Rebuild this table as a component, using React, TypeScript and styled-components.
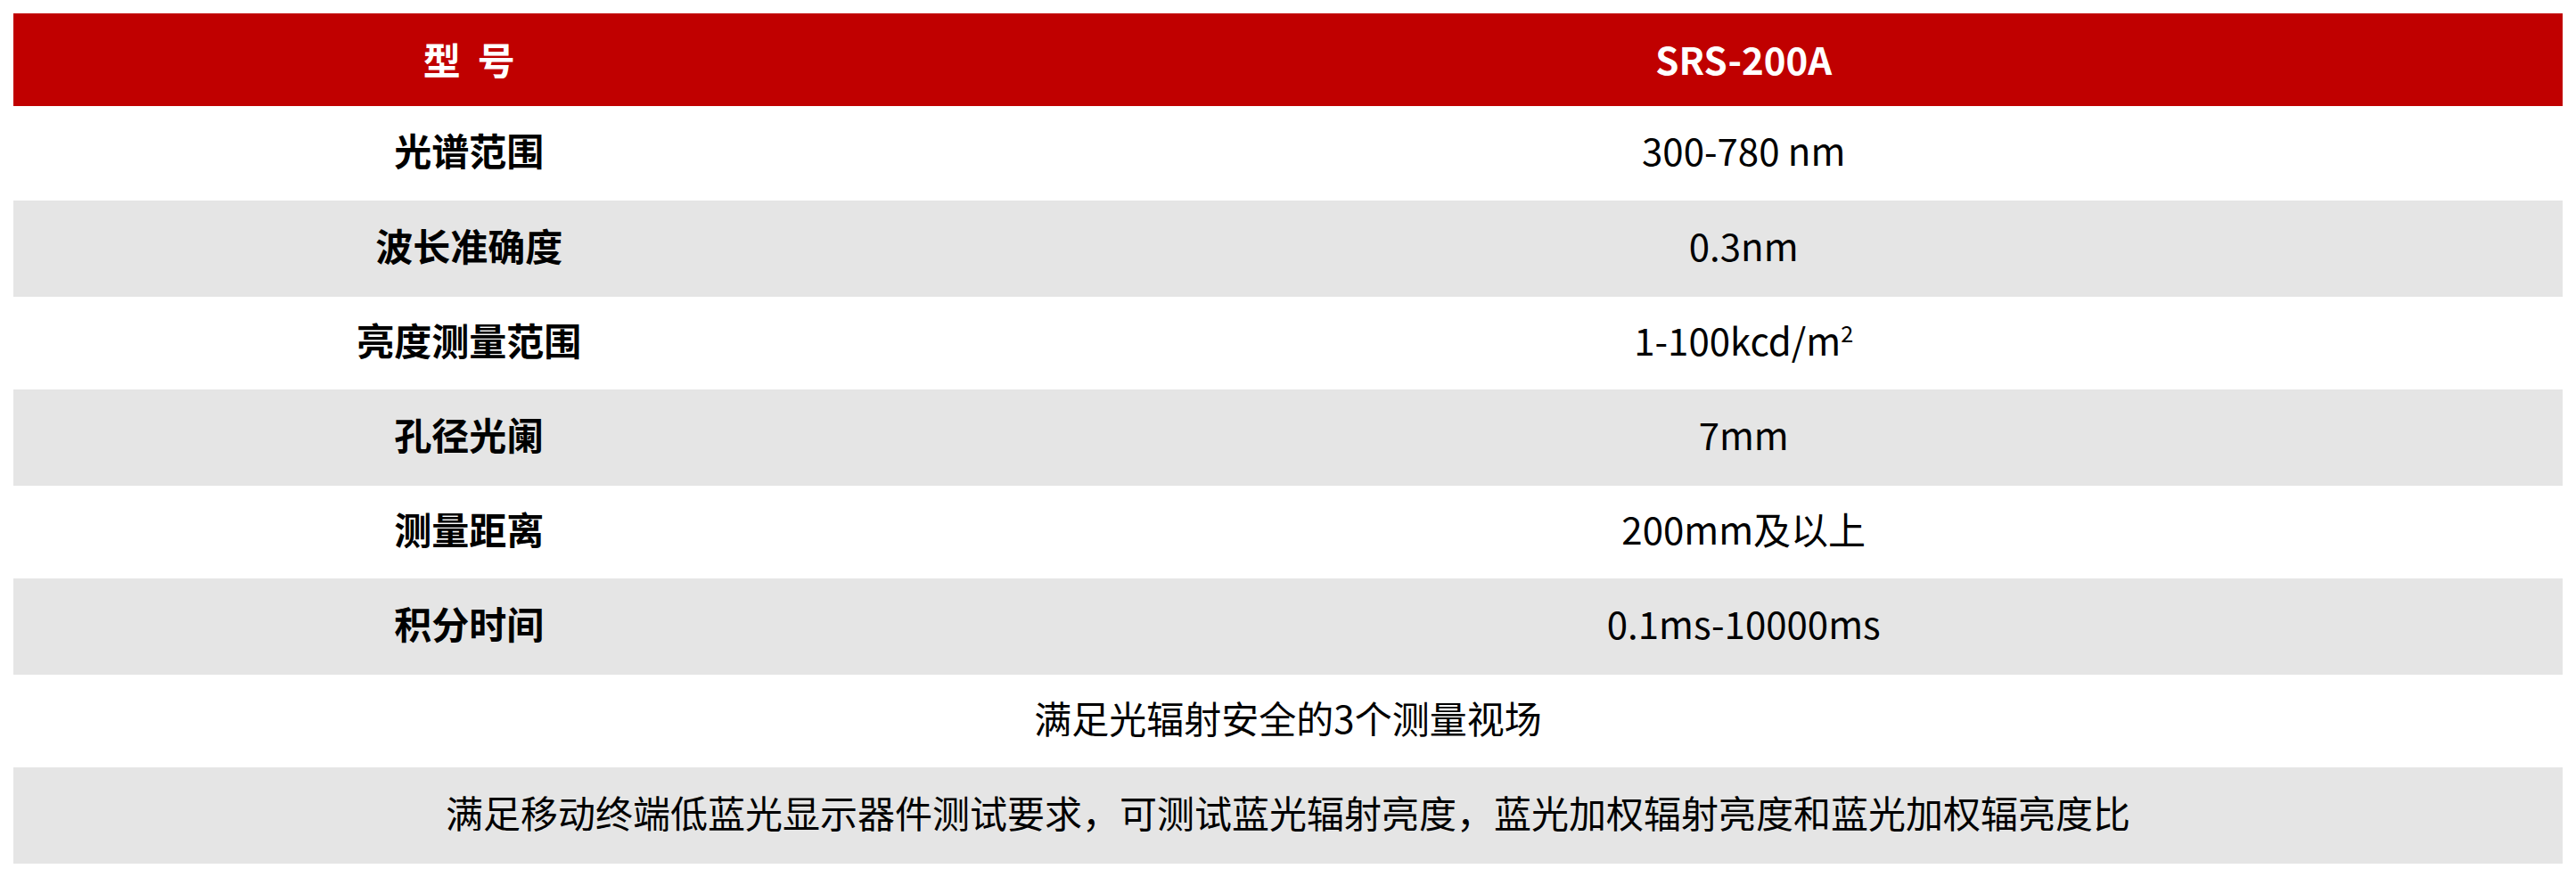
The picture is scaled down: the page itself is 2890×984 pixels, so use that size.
import styled, { createGlobalStyle } from 'styled-components';

const GlobalStyle = createGlobalStyle`
  html, body {
    margin: 0;
    padding: 0;
    background: #ffffff;
  }
  body {
    font-family: 'Noto Sans CJK SC', 'Noto Sans', sans-serif;
    color: #000000;
  }
`;

const Page = styled.div`
  padding: 15px 15px 0 15px;
`;

const Table = styled.div`
  width: 100%;
  display: flex;
  flex-direction: column;
`;

const HeaderRow = styled.div`
  display: grid;
  grid-template-columns: 35.75% 64.25%;
  height: 104px;
  padding-bottom: 4px;
  box-sizing: border-box;
  background: #c00000;
  color: #ffffff;
  font-size: 42px;
`;

const Row = styled.div<{ $shade: boolean; $height: number }>`
  display: grid;
  grid-template-columns: 35.75% 64.25%;
  height: ${(p) => p.$height}px;
  padding-bottom: 9px;
  box-sizing: border-box;
  background: ${(p) => (p.$shade ? '#e5e5e5' : '#ffffff')};
  font-size: 42px;
`;

const WideRow = styled(Row)`
  grid-template-columns: 100%;
`;

const Cell = styled.div<{ $bold?: boolean }>`
  display: flex;
  align-items: center;
  justify-content: center;
  font-weight: ${(p) => (p.$bold ? 700 : 400)};
  white-space: nowrap;
`;

const Sup = styled.sup`
  font-size: 0.6em;
  line-height: 0;
  position: relative;
  top: -0.3em;
`;

const specs: { label: string; value: React.ReactNode }[] = [
  { label: '光谱范围', value: '300-780 nm' },
  { label: '波长准确度', value: '0.3nm' },
  {
    label: '亮度测量范围',
    value: (
      <>
        1-100kcd/m<Sup>2</Sup>
      </>
    ),
  },
  { label: '孔径光阑', value: '7mm' },
  { label: '测量距离', value: '200mm及以上' },
  { label: '积分时间', value: '0.1ms-10000ms' },
];

const notes = [
  '满足光辐射安全的3个测量视场',
  '满足移动终端低蓝光显示器件测试要求，可测试蓝光辐射亮度，蓝光加权辐射亮度和蓝光加权辐亮度比',
];

const rowHeight = (i: number) => (i % 2 === 1 ? 108 : i === 0 ? 106 : 104);

export default function App() {
  return (
    <Page>
      <GlobalStyle />
      <Table>
        <HeaderRow>
          <Cell $bold>型&nbsp;&nbsp;号</Cell>
          <Cell $bold>SRS-200A</Cell>
        </HeaderRow>
        {specs.map((s, i) => (
          <Row key={s.label} $shade={i % 2 === 1} $height={rowHeight(i)}>
            <Cell $bold>{s.label}</Cell>
            <Cell>{s.value}</Cell>
          </Row>
        ))}
        {notes.map((n, j) => {
          const i = specs.length + j;
          return (
            <WideRow key={n} $shade={i % 2 === 1} $height={rowHeight(i)}>
              <Cell>{n}</Cell>
            </WideRow>
          );
        })}
      </Table>
    </Page>
  );
}
